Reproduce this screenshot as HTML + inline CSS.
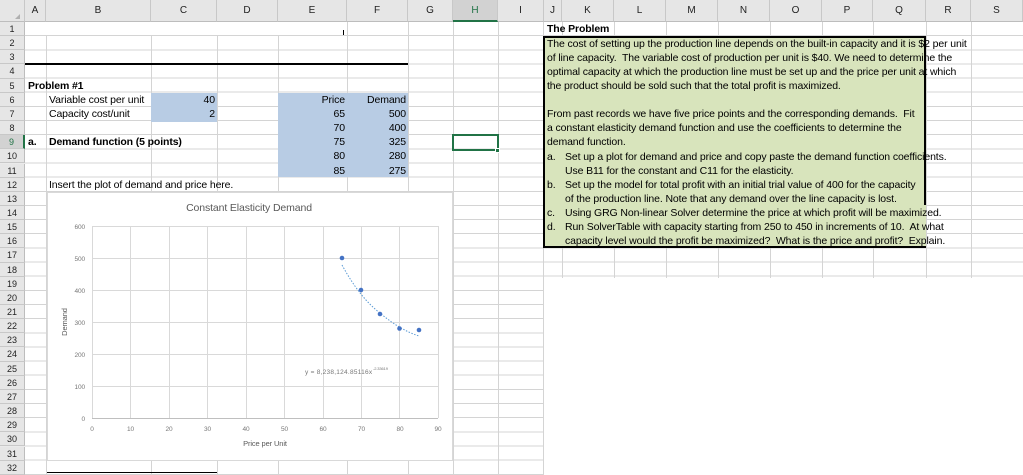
<!DOCTYPE html>
<html><head><meta charset="utf-8"><style>
*{margin:0;padding:0;box-sizing:border-box}
body{width:1023px;height:475px;overflow:hidden;background:#fff;position:relative;font-family:"Liberation Sans",sans-serif;font-size:10.5px;letter-spacing:-0.12px;color:#000}
.a{position:absolute}
.vl{position:absolute;width:1px;background:#d4d4d4}
.hdr{position:absolute;top:0;height:22px;background:#e6e6e6;border-right:1px solid #c8c8c8;border-bottom:1px solid #bdbdbd;text-align:center;line-height:22px;font-size:10px;color:#222;letter-spacing:0}
.rh{position:absolute;left:0;width:25px;background:#e6e6e6;border-bottom:1px solid #c8c8c8;border-right:1px solid #bdbdbd;text-align:center;font-size:9px;color:#222;letter-spacing:0}
.t{position:absolute;white-space:nowrap;line-height:14px}
.r{text-align:right}
.b{font-weight:bold;font-size:10.5px}
</style></head><body>
<div class="a" style="left:0;top:22px;width:1023px;height:453px;background:repeating-linear-gradient(to bottom,transparent 0,transparent 13.15px,#d4d4d4 13.15px,#d4d4d4 14.15px)"></div>
<div class="vl" style="left:46px;top:22px;height:453px"></div>
<div class="vl" style="left:151px;top:22px;height:453px"></div>
<div class="vl" style="left:217px;top:22px;height:453px"></div>
<div class="vl" style="left:278px;top:22px;height:453px"></div>
<div class="vl" style="left:347px;top:22px;height:453px"></div>
<div class="vl" style="left:408px;top:22px;height:453px"></div>
<div class="vl" style="left:453px;top:22px;height:453px"></div>
<div class="vl" style="left:498px;top:22px;height:453px"></div>
<div class="vl" style="left:543px;top:22px;height:453px"></div>
<div class="vl" style="left:562px;top:22px;height:268px"></div>
<div class="vl" style="left:614px;top:22px;height:268px"></div>
<div class="vl" style="left:666px;top:22px;height:268px"></div>
<div class="vl" style="left:718px;top:22px;height:268px"></div>
<div class="vl" style="left:770px;top:22px;height:268px"></div>
<div class="vl" style="left:822px;top:22px;height:268px"></div>
<div class="vl" style="left:873px;top:22px;height:268px"></div>
<div class="vl" style="left:926px;top:22px;height:268px"></div>
<div class="vl" style="left:971px;top:22px;height:268px"></div>
<div class="a" style="left:544px;top:278px;width:479px;height:197px;background:#fff"></div>
<div class="a" style="left:26px;top:22px;width:320px;height:13px;background:#fff"></div>
<div class="a" style="left:343px;top:30px;width:1px;height:5px;background:#000"></div>
<div class="hdr" style="left:0;width:25px"></div>
<div class="hdr" style="left:25px;width:21px">A</div>
<div class="hdr" style="left:46px;width:105px">B</div>
<div class="hdr" style="left:151px;width:66px">C</div>
<div class="hdr" style="left:217px;width:61px">D</div>
<div class="hdr" style="left:278px;width:69px">E</div>
<div class="hdr" style="left:347px;width:61px">F</div>
<div class="hdr" style="left:408px;width:45px">G</div>
<div class="hdr" style="left:453px;width:45px;background:#d2d2d2;border-bottom:2px solid #217346;color:#217346">H</div>
<div class="hdr" style="left:498px;width:46px">I</div>
<div class="hdr" style="left:544px;width:18px">J</div>
<div class="hdr" style="left:562px;width:52px">K</div>
<div class="hdr" style="left:614px;width:52px">L</div>
<div class="hdr" style="left:666px;width:52px">M</div>
<div class="hdr" style="left:718px;width:52px">N</div>
<div class="hdr" style="left:770px;width:52px">O</div>
<div class="hdr" style="left:822px;width:51px">P</div>
<div class="hdr" style="left:873px;width:53px">Q</div>
<div class="hdr" style="left:926px;width:45px">R</div>
<div class="hdr" style="left:971px;width:52px">S</div>
<div class="a" style="left:15px;top:14px;width:0;height:0;border-left:5px solid transparent;border-bottom:5px solid #b0b0b0"></div>
<div class="rh" style="top:22px;height:14.15px;line-height:14px">1</div>
<div class="rh" style="top:36.15px;height:14.15px;line-height:14px">2</div>
<div class="rh" style="top:50.3px;height:14.15px;line-height:14px">3</div>
<div class="rh" style="top:64.45px;height:14.15px;line-height:14px">4</div>
<div class="rh" style="top:78.6px;height:14.15px;line-height:14px">5</div>
<div class="rh" style="top:92.75px;height:14.15px;line-height:14px">6</div>
<div class="rh" style="top:106.9px;height:14.15px;line-height:14px">7</div>
<div class="rh" style="top:121.05px;height:14.15px;line-height:14px">8</div>
<div class="rh" style="top:135.2px;height:14.15px;line-height:14px;background:#d2d2d2;color:#217346;border-right:2px solid #217346">9</div>
<div class="rh" style="top:149.35px;height:14.15px;line-height:14px">10</div>
<div class="rh" style="top:163.5px;height:14.15px;line-height:14px">11</div>
<div class="rh" style="top:177.65px;height:14.15px;line-height:14px">12</div>
<div class="rh" style="top:191.8px;height:14.15px;line-height:14px">13</div>
<div class="rh" style="top:205.95px;height:14.15px;line-height:14px">14</div>
<div class="rh" style="top:220.1px;height:14.15px;line-height:14px">15</div>
<div class="rh" style="top:234.25px;height:14.15px;line-height:14px">16</div>
<div class="rh" style="top:248.4px;height:14.15px;line-height:14px">17</div>
<div class="rh" style="top:262.55px;height:14.15px;line-height:14px">18</div>
<div class="rh" style="top:276.7px;height:14.15px;line-height:14px">19</div>
<div class="rh" style="top:290.85px;height:14.15px;line-height:14px">20</div>
<div class="rh" style="top:305px;height:14.15px;line-height:14px">21</div>
<div class="rh" style="top:319.15px;height:14.15px;line-height:14px">22</div>
<div class="rh" style="top:333.3px;height:14.15px;line-height:14px">23</div>
<div class="rh" style="top:347.45px;height:14.15px;line-height:14px">24</div>
<div class="rh" style="top:361.6px;height:14.15px;line-height:14px">25</div>
<div class="rh" style="top:375.75px;height:14.15px;line-height:14px">26</div>
<div class="rh" style="top:389.9px;height:14.15px;line-height:14px">27</div>
<div class="rh" style="top:404.05px;height:14.15px;line-height:14px">28</div>
<div class="rh" style="top:418.2px;height:14.15px;line-height:14px">29</div>
<div class="rh" style="top:432.35px;height:14.15px;line-height:14px">30</div>
<div class="rh" style="top:446.5px;height:14.15px;line-height:14px">31</div>
<div class="rh" style="top:460.65px;height:14.35px;line-height:14px">32</div>
<div class="a" style="left:151px;top:93px;width:66px;height:29px;background:#b8cce4"></div>
<div class="a" style="left:278px;top:93px;width:130px;height:84px;background:#b8cce4"></div>
<div class="a" style="left:25px;top:63px;width:383px;height:2px;background:#000"></div>
<div class="t b" style="left:28px;top:79px">Problem #1</div>
<div class="t" style="left:49px;top:93px">Variable cost per unit</div>
<div class="t" style="left:49px;top:107px">Capacity cost/unit</div>
<div class="t r" style="left:151px;top:93px;width:64px">40</div>
<div class="t r" style="left:151px;top:107px;width:64px">2</div>
<div class="t b" style="left:28px;top:135px">a.</div>
<div class="t b" style="left:49px;top:135px">Demand function (5 points)</div>
<div class="t r" style="left:278px;top:93px;width:67px">Price</div>
<div class="t r" style="left:347px;top:93px;width:59px">Demand</div>
<div class="t r" style="left:278px;top:107px;width:67px">65</div>
<div class="t r" style="left:347px;top:107px;width:59px">500</div>
<div class="t r" style="left:278px;top:121px;width:67px">70</div>
<div class="t r" style="left:347px;top:121px;width:59px">400</div>
<div class="t r" style="left:278px;top:135px;width:67px">75</div>
<div class="t r" style="left:347px;top:135px;width:59px">325</div>
<div class="t r" style="left:278px;top:149px;width:67px">80</div>
<div class="t r" style="left:347px;top:149px;width:59px">280</div>
<div class="t r" style="left:278px;top:164px;width:67px">85</div>
<div class="t r" style="left:347px;top:164px;width:59px">275</div>
<div class="t" style="left:49px;top:178px">Insert the plot of demand and price here.</div>
<div class="a" style="left:452px;top:134px;width:47px;height:17px;border:2px solid #217346"></div>
<div class="a" style="left:495px;top:148px;width:5px;height:5px;background:#217346;border:1px solid #fff"></div>
<div class="a" style="left:47px;top:192px;width:406px;height:269px;background:#fff;border:1px solid #d9d9d9"></div>
<svg class="a" style="left:0;top:0" width="1023" height="475">
<g stroke="#d9d9d9" stroke-width="1">
<line x1="92" y1="226.5" x2="438" y2="226.5"/><line x1="92" y1="258.5" x2="438" y2="258.5"/><line x1="92" y1="290.5" x2="438" y2="290.5"/><line x1="92" y1="322.5" x2="438" y2="322.5"/><line x1="92" y1="354.5" x2="438" y2="354.5"/><line x1="92" y1="386.5" x2="438" y2="386.5"/>
<line x1="92.5" y1="226" x2="92.5" y2="418"/><line x1="130.5" y1="226" x2="130.5" y2="418"/><line x1="169.5" y1="226" x2="169.5" y2="418"/><line x1="207.5" y1="226" x2="207.5" y2="418"/><line x1="246.5" y1="226" x2="246.5" y2="418"/><line x1="284.5" y1="226" x2="284.5" y2="418"/><line x1="323.5" y1="226" x2="323.5" y2="418"/><line x1="361.5" y1="226" x2="361.5" y2="418"/><line x1="399.5" y1="226" x2="399.5" y2="418"/><line x1="438.5" y1="226" x2="438.5" y2="418"/>
</g>
<line x1="92" y1="418.5" x2="438" y2="418.5" stroke="#bfbfbf"/>
<path d="M342 265 Q360 298 380 313 Q400 330 419 336" fill="none" stroke="#5b9bd5" stroke-width="1" stroke-dasharray="1.5 1.5"/>
<g fill="#4472c4"><circle cx="342" cy="258" r="2.3"/><circle cx="361" cy="290" r="2.3"/><circle cx="380" cy="314" r="2.3"/><circle cx="399.5" cy="328.5" r="2.3"/><circle cx="419" cy="330" r="2.3"/></g>
<text x="249" y="211" font-family="Liberation Sans" font-size="10.5" fill="#595959" text-anchor="middle">Constant Elasticity Demand</text>
<text x="265" y="446" font-family="Liberation Sans" font-size="7.5" fill="#595959" text-anchor="middle">Price per Unit</text>
<text x="0" y="0" font-family="Liberation Sans" font-size="7.5" fill="#595959" text-anchor="middle" transform="translate(67 322) rotate(-90)">Demand</text>
<text x="305" y="374" font-family="Liberation Sans" font-size="6.5" fill="#777" textLength="67">y = 8,238,124.85116x</text>
<text x="373" y="370" font-family="Liberation Sans" font-size="4" fill="#777">-2.33619</text>
<g font-family="Liberation Sans" font-size="6.5" fill="#777" text-anchor="end">
<text x="85" y="229">600</text><text x="85" y="261">500</text><text x="85" y="293">400</text><text x="85" y="325">300</text><text x="85" y="357">200</text><text x="85" y="389">100</text><text x="85" y="421">0</text></g>
<g font-family="Liberation Sans" font-size="6.5" fill="#777" text-anchor="middle">
<text x="92" y="431">0</text><text x="130.5" y="431">10</text><text x="169" y="431">20</text><text x="207.5" y="431">30</text><text x="246" y="431">40</text><text x="284.5" y="431">50</text><text x="323" y="431">60</text><text x="361.5" y="431">70</text><text x="400" y="431">80</text><text x="438" y="431">90</text></g>
</svg>
<div class="a" style="left:47px;top:472px;width:170px;height:1px;background:#000"></div>
<div class="t b" style="left:547px;top:22px">The Problem</div>
<div class="a" style="left:543px;top:36px;width:383px;height:212px;background:#d8e4bc;border:2px solid #000;border-right:none"></div>
<div class="a" style="left:924px;top:36px;width:2px;height:169px;background:#000"></div>
<div class="t" style="left:547px;top:37px">The cost of setting up the production line depends on the built-in capacity and it is $2 per unit</div>
<div class="t" style="left:547px;top:51px">of line capacity.&nbsp; The variable cost of production per unit is $40. We need to determine the</div>
<div class="t" style="left:547px;top:65px">optimal capacity at which the production line must be set up and the price per unit at which</div>
<div class="t" style="left:547px;top:79px">the product should be sold such that the total profit is maximized.</div>
<div class="t" style="left:547px;top:107px">From past records we have five price points and the corresponding demands.&nbsp; Fit</div>
<div class="t" style="left:547px;top:121px">a constant elasticity demand function and use the coefficients to determine the</div>
<div class="t" style="left:547px;top:135px">demand function.</div>
<div class="t" style="left:547px;top:150px">a.</div><div class="t" style="left:565px;top:150px">Set up a plot for demand and price and copy paste the demand function coefficients.</div>
<div class="t" style="left:565px;top:164px">Use B11 for the constant and C11 for the elasticity.</div>
<div class="t" style="left:547px;top:178px">b.</div><div class="t" style="left:565px;top:178px">Set up the model for total profit with an initial trial value of 400 for the capacity</div>
<div class="t" style="left:565px;top:192px">of the production line. Note that any demand over the line capacity is lost.</div>
<div class="t" style="left:547px;top:206px">c.</div><div class="t" style="left:565px;top:206px">Using GRG Non-linear Solver determine the price at which profit will be maximized.</div>
<div class="t" style="left:547px;top:220px">d.</div><div class="t" style="left:565px;top:220px">Run SolverTable with capacity starting from 250 to 450 in increments of 10.&nbsp; At what</div>
<div class="t" style="left:565px;top:234px">capacity level would the profit be maximized?&nbsp; What is the price and profit?&nbsp; Explain.</div>
</body></html>
